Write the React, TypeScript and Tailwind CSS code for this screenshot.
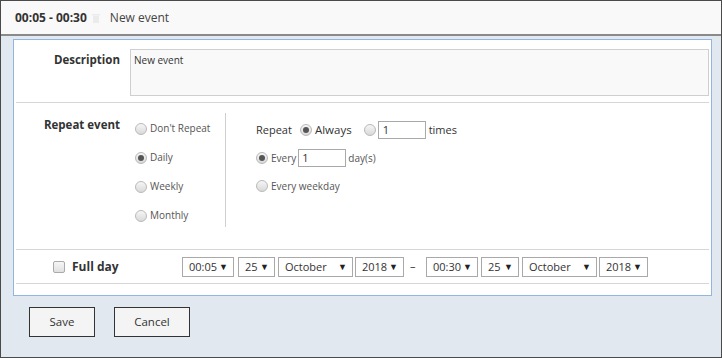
const font = "[font-family:'Open_Sans','Noto_Sans',sans-serif]";

const Radio = ({ checked = false }: { checked?: boolean }) => (
  <span className="flex h-[12px] w-[12px] shrink-0 items-center justify-center rounded-full border border-[#b9b9b9] bg-[linear-gradient(180deg,#f6f6f6,#d9d9d9)]">
    {checked && <span className="h-[6px] w-[6px] rounded-full bg-[#555]" />}
  </span>
);

const Select = ({ value, cls }: { value: string; cls: string }) => (
  <div
    className={`flex h-[20px] shrink-0 items-center justify-between border border-[#a9a9a9] bg-white pl-[6px] pr-[5px] text-[11px] leading-none text-[#333] ${cls}`}
  >
    <span>{value}</span>
    <span className="text-[9px] text-[#222]">▼</span>
  </div>
);

const repeatOptions = [
  { label: "Don't Repeat", checked: false },
  { label: "Daily", checked: true },
  { label: "Weekly", checked: false },
  { label: "Monthly", checked: false },
];

export default function App() {
  return (
    <div className={`flex h-[358px] w-[722px] flex-col border border-[#4a4a4a] bg-[#e2e8f0] ${font}`}>
      <div className="flex h-[35px] shrink-0 items-center border-b-2 border-[#8a8a8a] bg-[#f9f9f9] pl-[14px]">
        <span className="text-[12px] font-bold text-[#333]">00:05 - 00:30</span>
        <svg className="ml-[5px] h-[10px] w-[8px]" viewBox="0 0 8 10" fill="#ebebeb">
          <rect x="0" y="1" width="8" height="1.5" />
          <rect x="1" y="3" width="6" height="7" />
        </svg>
        <span className="ml-[10px] text-[12px] text-[#444]">New event</span>
      </div>

      <div className="ml-[12px] mt-[3px] flex h-[257px] w-[699px] flex-col border border-[#93b6de] bg-white px-[2px]">
        {/* description */}
        <div className="flex border-b border-[#d6d6d6] pb-[6px] pt-[9px]">
          <div className="w-[104px] pt-[2px] text-right text-[11.5px] font-bold text-[#333]">Description</div>
          <div className="ml-[10px] h-[47px] flex-1 border border-[#cfcfcf] bg-[#f9f9f9] px-[3px] pt-[3px] text-[10px] text-[#333]">
            New event
          </div>
        </div>

        {/* repeat */}
        <div className="flex h-[147px] border-b border-[#d6d6d6] pt-[10px]">
          <div className="w-[104px] pt-[3px] text-right text-[11.5px] font-bold text-[#333]">Repeat event</div>
          <div className="ml-[15px] flex h-[114px] w-[91px] flex-col border-r border-[#cfcfcf]">
            {repeatOptions.map((o) => (
              <div key={o.label} className="flex h-[29px] shrink-0 items-center gap-[3px] pt-[2px]">
                <Radio checked={o.checked} />
                <span className="text-[10px] text-[#555]">{o.label}</span>
              </div>
            ))}
          </div>
          <div className="ml-[30px] flex flex-col gap-[10px] pt-[8px] text-[#333]">
            <div className="flex h-[18px] items-center text-[11px]">
              <span>Repeat</span>
              <span className="ml-[8px]">
                <Radio checked />
              </span>
              <span className="ml-[3px] text-[11.5px]">Always</span>
              <span className="ml-[12px]">
                <Radio />
              </span>
              <div className="ml-[2px] flex h-[18px] w-[48px] items-center border border-[#a9a9a9] pl-[4px] text-[11px]">1</div>
              <span className="ml-[3px]">times</span>
            </div>
            <div className="flex h-[18px] items-center text-[10px] text-[#555]">
              <Radio checked />
              <span className="ml-[3px]">Every</span>
              <div className="ml-[2px] flex h-[18px] w-[48px] items-center border border-[#a9a9a9] pl-[3px] text-[11px] text-[#333]">1</div>
              <span className="ml-[2px]">day(s)</span>
            </div>
            <div className="flex h-[18px] items-center gap-[3px] text-[10px] text-[#555]">
              <Radio />
              <span>Every weekday</span>
            </div>
          </div>
        </div>

        {/* full day */}
        <div className="flex h-[34px] items-center border-b border-[#d6d6d6]">
          <div className="flex w-[166px] shrink-0 items-center pl-[37px]">
            <span className="h-[12px] w-[12px] rounded-[2px] border border-[#aaa] bg-[linear-gradient(180deg,#f6f6f6,#e0e0e0)]" />
            <span className="ml-[7px] text-[12px] font-bold text-[#333]">Full day</span>
          </div>
          <div className="flex items-center">
            <Select value="00:05" cls="w-[52px]" />
            <Select value="25" cls="ml-[4px] w-[37px]" />
            <Select value="October" cls="ml-[3px] w-[75px]" />
            <Select value="2018" cls="ml-[2px] w-[49px]" />
            <span className="ml-[6px] mr-[10px] w-[6px] text-[11px] text-[#333]">–</span>
            <Select value="00:30" cls="w-[52px]" />
            <Select value="25" cls="ml-[3px] w-[38px]" />
            <Select value="October" cls="ml-[3px] w-[75px]" />
            <Select value="2018" cls="ml-[2px] w-[49px]" />
          </div>
        </div>
      </div>

      <div className="ml-[28px] mt-[11px] flex gap-[19px]">
        <button className="h-[30px] w-[66px] border border-[#333] bg-[#f4f4f4] text-[11.5px] text-[#333]">Save</button>
        <button className="h-[30px] w-[76px] border border-[#333] bg-[#f4f4f4] text-[11.5px] text-[#333]">Cancel</button>
      </div>
    </div>
  );
}
